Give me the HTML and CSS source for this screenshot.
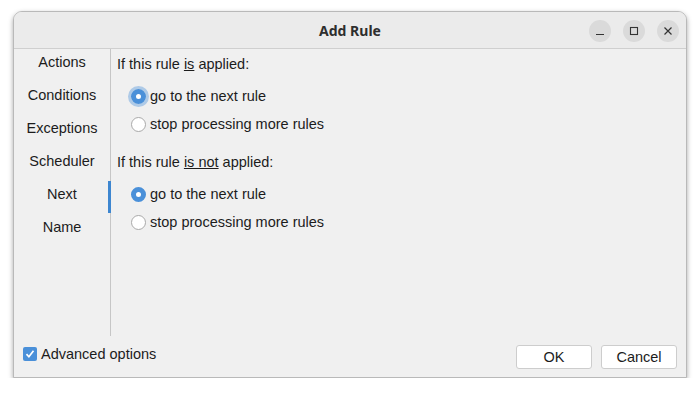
FILE: index.html
```html
<!DOCTYPE html>
<html lang="en">
<head>
    <meta charset="UTF-8">
    <meta name="viewport" content="width=device-width, initial-scale=1.0">
    <title>Add Rule</title>
    <link rel="stylesheet" href="styles.css">
</head>
<body>
    <div class="window">
        <div class="titlebar">
            <span class="title">Add Rule</span>
            <div class="controls">
                <span class="ctl">
                    <svg width="10" height="10" viewBox="0 0 10 10"><path d="M1 8.5h8" stroke="#333" stroke-width="1.2"/></svg>
                </span>
                <span class="ctl">
                    <svg width="10" height="10" viewBox="0 0 10 10"><rect x="1.5" y="1.5" width="7" height="7" fill="none" stroke="#333" stroke-width="1.1"/></svg>
                </span>
                <span class="ctl">
                    <svg width="10" height="10" viewBox="0 0 10 10"><path d="M1.5 1.5l7 7M8.5 1.5l-7 7" stroke="#333" stroke-width="1.2"/></svg>
                </span>
            </div>
        </div>

        <div class="main">
            <div class="sidebar">
                <div class="tab">Actions</div>
                <div class="tab">Conditions</div>
                <div class="tab">Exceptions</div>
                <div class="tab">Scheduler</div>
                <div class="tab active">Next</div>
                <div class="tab">Name</div>
            </div>

            <div class="content">
                <div class="heading">If this rule <u>is</u> applied:</div>
                <div class="group">
                    <label class="row"><span class="radio checked focus"></span>go to the next rule</label>
                    <label class="row"><span class="radio"></span>stop processing more rules</label>
                </div>

                <div class="heading">If this rule <u>is not</u> applied:</div>
                <div class="group">
                    <label class="row"><span class="radio checked"></span>go to the next rule</label>
                    <label class="row"><span class="radio"></span>stop processing more rules</label>
                </div>
            </div>
        </div>

        <div class="footer">
            <label class="advanced">
                <span class="check">
                    <svg width="14" height="14" viewBox="0 0 14 14"><path d="M3.5 7.2l2.4 2.6 4.6-6" fill="none" stroke="#fff" stroke-width="1.7"/></svg>
                </span>
                Advanced options
            </label>
            <div class="buttons">
                <button class="btn">OK</button>
                <button class="btn">Cancel</button>
            </div>
        </div>
    </div>
</body>
</html>
```

FILE: styles.css
```css
body {
    margin: 0;
    background-color: #fff;
    font-family: "Liberation Sans", Arial, sans-serif;
    font-size: 14.5px;
    color: #1c1c1c;
}

.window {
    margin: 11px 0 0 13px;
    width: 672px;
    height: 365px;
    border: 1px solid #b9b9b9;
    border-radius: 9px 9px 0 0;
    background-color: #f0f0f0;
    box-shadow: 0 2px 5px rgba(0, 0, 0, 0.35);
    display: flex;
    flex-direction: column;
    overflow: hidden;
}

.titlebar {
    height: 36px;
    flex: none;
    background-color: #ebebeb;
    border-bottom: 1px solid #cfcfcf;
    display: flex;
    align-items: center;
    justify-content: center;
    position: relative;
}

.title {
    font-family: "Noto Sans", sans-serif;
    font-weight: bold;
    font-size: 14px;
    color: #2e2e2e;
}

.controls {
    position: absolute;
    right: 7px;
    top: 8px;
    display: flex;
    gap: 12px;
}

.ctl {
    width: 22px;
    height: 22px;
    border-radius: 50%;
    background-color: #dadada;
    display: flex;
    align-items: center;
    justify-content: center;
}

.main {
    display: flex;
    height: 287px;
    flex: none;
}

.sidebar {
    width: 96px;
    border-right: 1px solid #c6c6c6;
    flex: none;
}

.tab {
    height: 33px;
    box-sizing: border-box;
    padding-top: 4px;
    line-height: 18px;
    text-align: center;
    position: relative;
}

.tab.active::after {
    content: "";
    position: absolute;
    right: -1px;
    top: 0;
    width: 3px;
    height: 32px;
    background-color: #3d86d0;
}

.content {
    padding: 6px 0 0 6px;
}

.heading {
    line-height: 18px;
    margin-bottom: 9px;
}

.group {
    margin-bottom: 15px;
    padding-left: 14px;
}

.row {
    display: flex;
    align-items: center;
    height: 28px;
    gap: 4px;
}

.radio {
    width: 13px;
    height: 13px;
    border: 1px solid #a9a9a9;
    border-radius: 50%;
    background-color: #fff;
    box-sizing: content-box;
    flex: none;
}

.radio.checked {
    width: 5px;
    height: 5px;
    border: 5px solid #4a90d9;
    background-color: #fff;
}

.radio.focus {
    outline: 3px solid rgba(74, 144, 217, 0.4);
}

.footer {
    flex: 1;
    display: flex;
    align-items: center;
    justify-content: space-between;
    padding: 0 9px 0 9px;
}

.advanced {
    display: flex;
    align-items: center;
    gap: 4px;
    margin-top: -6px;
}

.check {
    width: 14px;
    height: 14px;
    border-radius: 2px;
    background-color: #4a90d9;
    display: flex;
}

.buttons {
    display: flex;
    gap: 9px;
}

.btn {
    width: 76px;
    height: 24px;
    background-color: #fff;
    border: 1px solid #cdcdcd;
    border-radius: 3px;
    font-family: "Liberation Sans", Arial, sans-serif;
    font-size: 14.5px;
    color: #1c1c1c;
    padding: 0;
}
```
